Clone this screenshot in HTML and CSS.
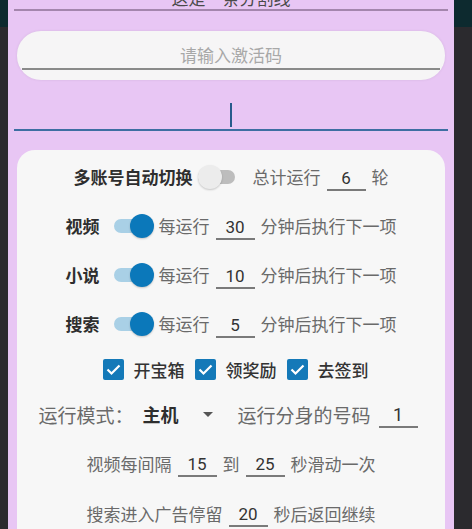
FILE: index.html
```html
<!DOCTYPE html>
<html lang="zh">
<head>
  <meta charset="UTF-8" />
  <meta name="viewport" content="width=device-width, initial-scale=1.0" />
  <title>设置</title>
  <link rel="stylesheet" href="styles.css">
</head>
<body>
  <div class="dialog">
    <div class="title">这是一条分割线</div>

    <div class="code-box">
      <div class="code-input">请输入激活码</div>
    </div>

    <div class="cursor-field"><span class="caret"></span></div>

    <div class="card">
      <div class="row r-switch">
        <span class="label">多账号自动切换</span>
        <span class="switch first"></span>
        <span class="txt gap-l">总计运行</span>
        <span class="num">6</span>
        <span class="txt">轮</span>
      </div>

      <div class="row r-switch">
        <span class="label">视频</span>
        <span class="switch on"></span>
        <span class="txt">每运行</span>
        <span class="num">30</span>
        <span class="txt">分钟后执行下一项</span>
      </div>

      <div class="row r-switch">
        <span class="label">小说</span>
        <span class="switch on"></span>
        <span class="txt">每运行</span>
        <span class="num">10</span>
        <span class="txt">分钟后执行下一项</span>
      </div>

      <div class="row r-switch">
        <span class="label">搜索</span>
        <span class="switch on"></span>
        <span class="txt">每运行</span>
        <span class="num">5</span>
        <span class="txt">分钟后执行下一项</span>
      </div>

      <div class="row r-checks">
        <label class="check-item">
          <span class="check"><svg viewBox="0 0 21 21" width="21" height="21"><path d="M4.5 10.5 L8.5 14.5 L16.5 6.5" fill="none" stroke="#fff" stroke-width="2.2" /></svg></span>
          开宝箱
        </label>
        <label class="check-item">
          <span class="check"><svg viewBox="0 0 21 21" width="21" height="21"><path d="M4.5 10.5 L8.5 14.5 L16.5 6.5" fill="none" stroke="#fff" stroke-width="2.2" /></svg></span>
          领奖励
        </label>
        <label class="check-item">
          <span class="check"><svg viewBox="0 0 21 21" width="21" height="21"><path d="M4.5 10.5 L8.5 14.5 L16.5 6.5" fill="none" stroke="#fff" stroke-width="2.2" /></svg></span>
          去签到
        </label>
      </div>

      <div class="row r-mode">
        <span class="txt">运行模式：</span>
        <span class="label mode">主机</span>
        <span class="arrow"></span>
        <span class="txt">运行分身的号码</span>
        <span class="num">1</span>
      </div>

      <div class="row r-wide">
        <span class="txt">视频每间隔</span>
        <span class="num">15</span>
        <span class="txt">到</span>
        <span class="num">25</span>
        <span class="txt">秒滑动一次</span>
      </div>

      <div class="row r-wide">
        <span class="txt">搜索进入广告停留</span>
        <span class="num">20</span>
        <span class="txt">秒后返回继续</span>
      </div>
    </div>
  </div>
</body>
</html>
```

FILE: styles.css
```css
body {
  margin: 0;
  padding: 0;
  height: 529px;
  overflow: hidden;
  background: linear-gradient(#0d2a2f 0, #0d2a2f 27px, #2b2a2e 27px);
  font-family: Roboto, "Noto Sans CJK SC", sans-serif;
  font-size: 17px;
  color: #333;
}

.dialog {
  width: 446px;
  margin-left: 8px;
  height: 529px;
  background: #e8c6f4;
  overflow: hidden;
}

.title {
  margin: -11px 6px 0;
  height: 20px;
  line-height: 20px;
  text-align: center;
  color: #4a4a4a;
  border-bottom: 2px solid #a486ad;
}

.code-box {
  margin: 20px 9px 0;
  height: 49px;
  background: #f6f5f6;
  border-radius: 24px;
  box-shadow: 0 0 3px rgba(0,0,0,0.08);
}

.code-input {
  margin: 0 5px;
  padding-top: 14px;
  line-height: 23px;
  text-align: center;
  color: #a8a8a8;
  border-bottom: 2px solid #8a8a8a;
}

.cursor-field {
  margin: 0 6px;
  height: 49px;
  display: flex;
  justify-content: center;
  align-items: flex-start;
  border-bottom: 2px solid #3d6ea2;
}

.caret {
  margin-top: 23px;
  width: 2px;
  height: 24px;
  background: #275b8c;
}

.card {
  margin: 19px 9px 0;
  padding-top: 2px;
  background: #f7f7f7;
  border-radius: 18px;
  height: 400px;
}

.row {
  display: flex;
  justify-content: center;
  align-items: center;
}

.r-switch { height: 49px; }
.r-checks { height: 42px; padding-left: 9px; }
.r-mode { height: 48px; font-size: 19px; }
.r-wide { height: 50px; }

.label {
  font-weight: bold;
  color: #2e2e2e;
}

.txt {
  color: #6a6a6a;
}

.gap-l {
  margin-left: 15px;
}

.num {
  width: 39px;
  margin: 0 6px;
  padding-top: 4px;
  line-height: 22px;
  text-align: center;
  color: #333;
  border-bottom: 2px solid #7a7a7a;
}

.switch {
  position: relative;
  width: 40px;
  height: 24px;
  margin: 0 5px 0 14px;
}

.switch.first {
  margin: 0 0 0 5px;
}

.switch::before {
  content: "";
  position: absolute;
  left: 0;
  top: 5px;
  width: 37px;
  height: 14px;
  border-radius: 7px;
  background: #bdbdbd;
}

.switch::after {
  content: "";
  position: absolute;
  left: 0;
  top: 0;
  width: 24px;
  height: 24px;
  border-radius: 50%;
  background: #ececec;
  box-shadow: 0 1px 2px rgba(0,0,0,0.2);
}

.switch.on::before {
  background: #a9d0e6;
}

.switch.on::after {
  left: 16px;
  background: #0b78ba;
}

.check-item {
  display: flex;
  align-items: center;
  color: #333;
  font-weight: 500;
  margin: 0 5px;
}

.check {
  width: 21px;
  height: 21px;
  margin-right: 10px;
  border-radius: 2px;
  background: #1479b8;
  display: flex;
}

.mode {
  margin-left: 9px;
  font-size: 18px;
}

.arrow {
  width: 0;
  height: 0;
  margin: 0 25px 0 24px;
  border-left: 5px solid transparent;
  border-right: 5px solid transparent;
  border-top: 5px solid #555;
}

.r-mode .num {
  font-size: 18px;
  margin-left: 8px;
}
```
